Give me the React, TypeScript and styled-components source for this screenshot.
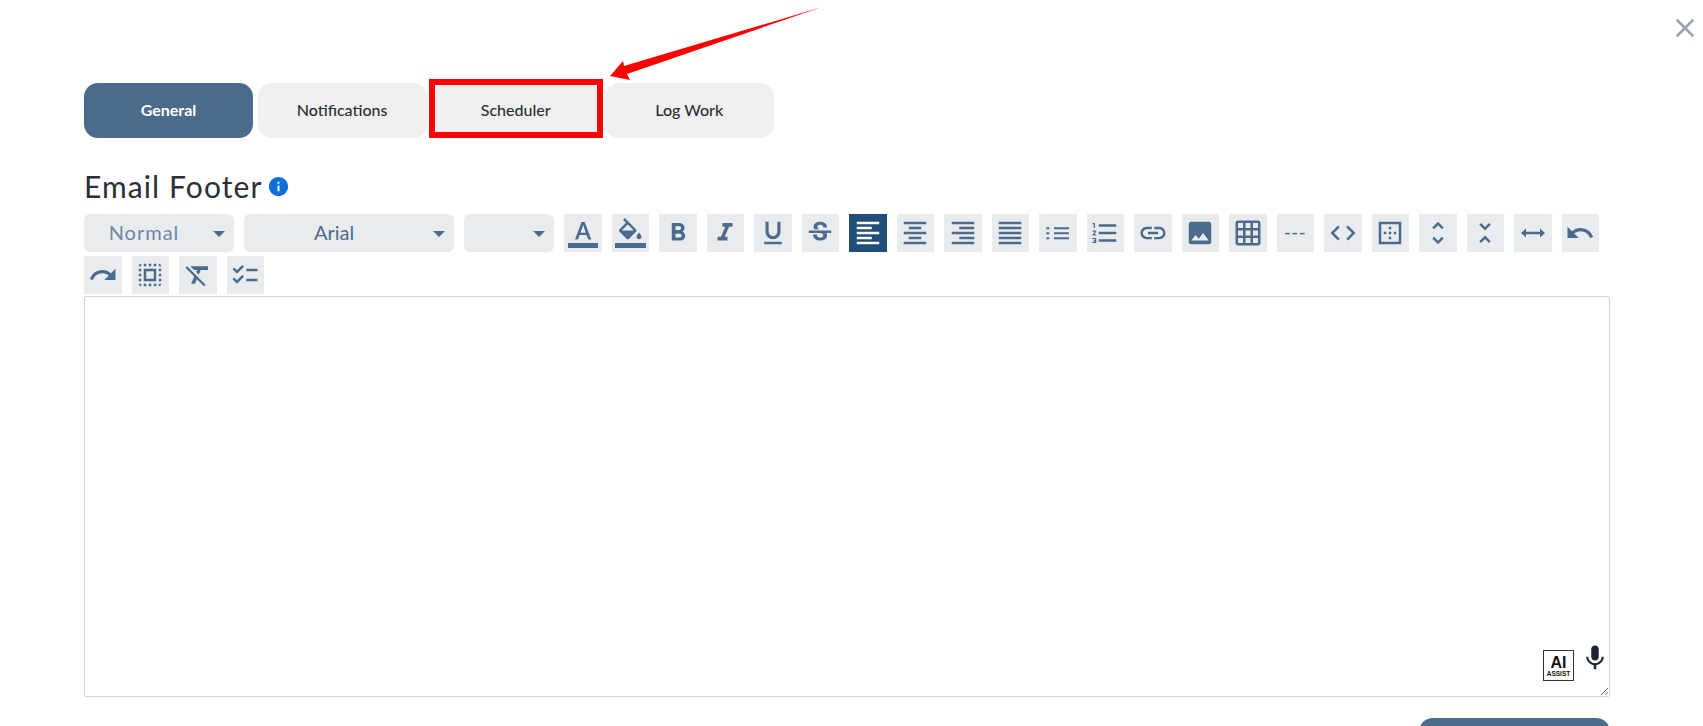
import React from "react";
import styled, { createGlobalStyle } from "styled-components";
import {
  MdChecklist,
  MdBorderOuter,
  MdCode,
  MdFormatAlignCenter,
  MdFormatAlignJustify,
  MdFormatAlignLeft,
  MdFormatAlignRight,
  MdFormatBold,
  MdFormatClear,
  MdFormatItalic,
  MdFormatListNumbered,
  MdFormatUnderlined,
  MdGridOn,
  MdImage,
  MdInfo,
  MdLink,
  MdMic,
  MdRedo,
  MdSelectAll,
  MdStrikethroughS,
  MdUndo,
  MdUnfoldLess,
  MdUnfoldMore,
} from "react-icons/md";

const GlobalStyle = createGlobalStyle`
  html, body {
    margin: 0;
    height: 100%;
    background: #fff;
    overflow: hidden;
  }
  * { box-sizing: border-box; }
`;

const Page = styled.div`
  position: relative;
  height: 726px;
  padding: 83px 93px 0 84px;
  font-family: "Lato", "Noto Sans", sans-serif;
  overflow: hidden;
`;

const CloseButton = styled.button`
  position: absolute;
  top: 14px;
  right: 4px;
  width: 28px;
  height: 28px;
  padding: 0;
  border: 0;
  background: none;
  color: #9aa3b2;
  display: flex;
`;

const TabRow = styled.div`
  position: relative;
  display: flex;
  gap: 4.6px;
`;

const Tab = styled.div<{ $active?: boolean }>`
  width: 169px;
  height: 55px;
  padding-bottom: 3px;
  border-radius: 14px;
  display: flex;
  align-items: center;
  justify-content: center;
  font-size: 16px;
  font-weight: ${({ $active }) => ($active ? 700 : 500)};
  background: ${({ $active }) => ($active ? "#4c6a8b" : "#f0f0f0")};
  color: ${({ $active }) => ($active ? "#fff" : "#2b2f36")};
`;

const Highlight = styled.div`
  position: absolute;
  left: 345px;
  top: -4px;
  width: 174px;
  height: 59px;
  border: 6.5px solid #ff0000;
`;

const Arrow = styled.svg`
  position: absolute;
  left: 600px;
  top: 0;
`;

const Heading = styled.div`
  display: flex;
  align-items: center;
  gap: 4px;
  margin-top: 29px;
  height: 38px;
  font-size: 30px;
  color: #2b2f36;
  letter-spacing: 1.1px;
`;

const InfoIcon = styled(MdInfo)`
  color: #0f6fd8;
  font-size: 23px;
`;

const Toolbar = styled.div`
  display: flex;
  flex-wrap: wrap;
  column-gap: 10px;
  row-gap: 4px;
  margin-top: 9px;
`;

const Select = styled.div<{ $width: number; $muted?: boolean }>`
  position: relative;
  width: ${({ $width }) => $width}px;
  height: 38px;
  padding: 0 30px 2px 0;
  border-radius: 6px;
  background: #e9ecef;
  display: flex;
  align-items: center;
  justify-content: center;
  font-size: 20px;
  letter-spacing: ${({ $muted }) => ($muted ? "1px" : "0")};
  color: ${({ $muted }) => ($muted ? "#6c87a3" : "#4c6a8b")};
  &::after {
    content: "";
    position: absolute;
    right: 9px;
    top: 17px;
    border-left: 6px solid transparent;
    border-right: 6px solid transparent;
    border-top: 6px solid #4c6a8b;
  }
`;

const ToolButton = styled.button<{ $active?: boolean }>`
  width: 37.5px;
  height: 37.5px;
  padding: 0;
  border: 0;
  display: flex;
  align-items: center;
  justify-content: center;
  font-size: 30px;
  background: ${({ $active }) => ($active ? "#1f4e79" : "#e9ecef")};
  color: ${({ $active }) => ($active ? "#fff" : "#4c6a8b")};
`;

const RuleGlyph = styled.span`
  font-family: "Liberation Sans", sans-serif;
  font-size: 19px;
  letter-spacing: 1px;
  color: #4c6a8b;
`;

const EditorWrap = styled.div`
  position: relative;
  margin-top: 2.5px;
  height: 401px;
`;

const Editor = styled.textarea`
  display: block;
  width: 100%;
  height: 100%;
  border: 1px solid #ced4da;
  border-radius: 2px;
  outline: none;
  resize: vertical;
`;

const AiBadge = styled.div`
  position: absolute;
  right: 36px;
  bottom: 16px;
  width: 31px;
  height: 31px;
  border: 1px solid #333;
  background: #fff;
  color: #111;
  display: flex;
  flex-direction: column;
  align-items: center;
  justify-content: center;
  font-family: "Liberation Sans", sans-serif;
  font-weight: 700;
  font-size: 16px;
  line-height: 15px;
  & > small {
    font-size: 6.5px;
    line-height: 7px;
  }
`;

const MicIcon = styled(MdMic)`
  position: absolute;
  right: 0;
  bottom: 24px;
  font-size: 30px;
  color: #1c2430;
`;

const SaveButton = styled.div`
  margin: 21px 0 0 auto;
  width: 191px;
  height: 46px;
  border-radius: 14px;
  background: #4c6a8b;
`;

function CloseIcon() {
  return (
    <svg width="28" height="28" viewBox="0 0 28 28" stroke="currentColor" strokeWidth="2.6" strokeLinecap="round">
      <path d="M6.500 6.500l15 15M21.500 6.500l-15 15" />
    </svg>
  );
}

function TextColorIcon() {
  return (
    <svg width="37.5" height="37.500" viewBox="0 0 37.500 37.500" fill="currentColor">
      <path
        transform="translate(4.140 4.250) scale(1.250)"
        d="M5.490 17h2.420l1.270-3.580h5.650L16.090 17h2.410L13.250 3h-2.500L5.490 17zm4.420-5.500 2.050-5.900h.12l2.050 5.900H9.910z"
      />
      <rect x="4" y="29" width="30" height="5" />
    </svg>
  );
}

function FillColorIcon() {
  return (
    <svg width="37.500" height="37.500" viewBox="0 0 37.500 37.500" fill="currentColor">
      <path
        transform="translate(3.250 4) scale(1.250)"
        d="M16.560 8.940L7.620 0 6.210 1.410l2.380 2.380-5.150 5.150c-.59.590-.59 1.540 0 2.120l5.500 5.500c.29.290.68.440 1.060.440s.77-.15 1.060-.44l5.500-5.500c.59-.58.59-1.530 0-2.120zM5.210 10L10 5.210 14.790 10H5.210zM19 11.500s-2 2.170-2 3.500c0 1.100.9 2 2 2s2-.9 2-2c0-1.330-2-3.500-2-3.500z"
      />
      <rect x="3" y="29" width="31" height="5" />
    </svg>
  );
}

function HorizontalResize() {
  return (
    <svg width="30" height="30" viewBox="0 0 30 30" fill="currentColor">
      <path d="M3 15l5-4.500v3.300h14v-3.300l5 4.500-5 4.500v-3.300H8v3.300z" />
    </svg>
  );
}

function BulletList() {
  return (
    <svg width="30" height="30" viewBox="0 0 30 30" fill="currentColor">
      <path d="M3.300 9.300h3v2h-3zM3.300 14.300h3v2h-3zM3.300 19.300h3v2h-3z" />
      <path d="M11 9.300h15v2H11zM11 14.300h15v2H11zM11 19.300h15v2H11z" />
    </svg>
  );
}

const firstRow = [
  { icon: <TextColorIcon /> },
  { icon: <FillColorIcon /> },
  { icon: <MdFormatBold /> },
  { icon: <MdFormatItalic /> },
  { icon: <MdFormatUnderlined /> },
  { icon: <MdStrikethroughS /> },
  { icon: <MdFormatAlignLeft />, active: true },
  { icon: <MdFormatAlignCenter /> },
  { icon: <MdFormatAlignRight /> },
  { icon: <MdFormatAlignJustify /> },
  { icon: <BulletList /> },
  { icon: <MdFormatListNumbered /> },
  { icon: <MdLink /> },
  { icon: <MdImage /> },
  { icon: <MdGridOn /> },
  { icon: <RuleGlyph>---</RuleGlyph> },
  { icon: <MdCode /> },
  { icon: <MdBorderOuter /> },
  { icon: <MdUnfoldMore /> },
  { icon: <MdUnfoldLess /> },
  { icon: <HorizontalResize /> },
  { icon: <MdUndo /> },
  { icon: <MdRedo /> },
  { icon: <MdSelectAll /> },
  { icon: <MdFormatClear /> },
  { icon: <MdChecklist /> },
];

export default function App() {
  return (
    <Page>
      <GlobalStyle />
      <CloseButton>
        <CloseIcon />
      </CloseButton>
      <TabRow>
        <Tab $active>General</Tab>
        <Tab>Notifications</Tab>
        <Tab>Scheduler</Tab>
        <Tab>Log Work</Tab>
        <Highlight />
      </TabRow>
      <Arrow width="240" height="90" viewBox="0 0 240 90">
        <path d="M222 7 L27 74 L30 80 L10 76 L23 61 L24 66 Z" fill="#ff0000" />
      </Arrow>
      <Heading>
        Email Footer
        <InfoIcon />
      </Heading>
      <Toolbar>
        <Select $width={150} $muted>
          Normal
        </Select>
        <Select $width={210}>Arial</Select>
        <Select $width={90} />
        {firstRow.map((item, index) => (
          <ToolButton key={index} $active={item.active}>
            {item.icon}
          </ToolButton>
        ))}
      </Toolbar>
      <EditorWrap>
        <Editor />
        <AiBadge>
          AI
          <small>ASSIST</small>
        </AiBadge>
        <MicIcon />
      </EditorWrap>
      <SaveButton />
    </Page>
  );
}
